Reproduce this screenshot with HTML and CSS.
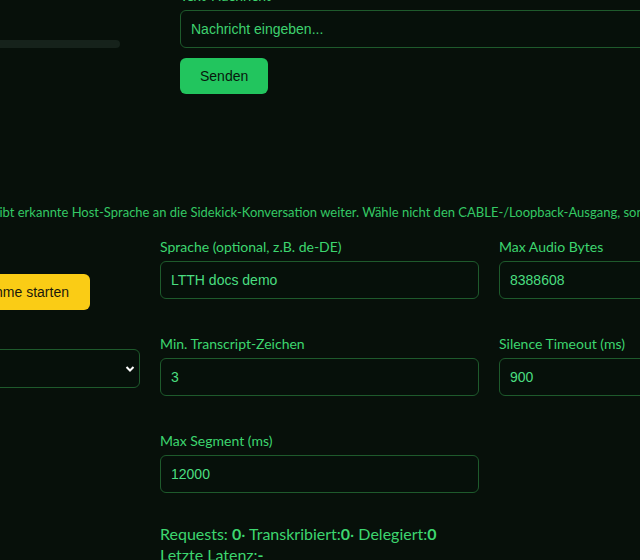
FILE: index.html
```html
<!DOCTYPE html>
<html lang="de">
<head>
  <meta charset="UTF-8" />
  <meta name="viewport" content="width=device-width, initial-scale=1.0" />
  <title>Sidekick Transkription</title>
  <link rel="stylesheet" href="styles.css">
</head>
<body>
  <div id="page">
    <div id="topRow">
      <div class="levelCol">
        <div class="levelBar"><div class="levelFill"></div></div>
      </div>
      <div class="msgCol">
        <label class="fieldLabel" for="textMsg">Text-Nachricht</label>
        <input id="textMsg" class="textInput" type="text" placeholder="Nachricht eingeben..." />
        <button class="sendBtn">Senden</button>
      </div>
    </div>

    <p class="hint">Gibt erkannte Host-Sprache an die Sidekick-Konversation weiter. Wähle nicht den CABLE-/Loopback-Ausgang, sondern dein echtes Mikrofon.</p>

    <div id="sttGrid">
      <div class="deviceCol">
        <button class="recBtn">Aufnahme starten</button>
        <div class="selectWrap">
          <select class="deviceSelect">
            <option></option>
          </select>
          <svg class="chevron" width="10" height="8" viewBox="0 0 10 8"><path d="M1.5 2 L5 5.5 L8.5 2" fill="none" stroke="#fff" stroke-width="2"/></svg>
        </div>
      </div>

      <div class="field">
        <label class="fieldLabel">Sprache (optional, z.B. de-DE)</label>
        <input class="textInput" type="text" value="LTTH docs demo" />
      </div>
      <div class="field">
        <label class="fieldLabel">Max Audio Bytes</label>
        <input class="textInput" type="text" value="8388608" />
      </div>

      <div class="field">
        <label class="fieldLabel">Min. Transcript-Zeichen</label>
        <input class="textInput" type="text" value="3" />
      </div>
      <div class="field">
        <label class="fieldLabel">Silence Timeout (ms)</label>
        <input class="textInput" type="text" value="900" />
      </div>

      <div class="field">
        <label class="fieldLabel">Max Segment (ms)</label>
        <input class="textInput" type="text" value="12000" />
      </div>
      <div class="field"></div>

      <div class="stats">
        Requests: <b>0</b>· Transkribiert:<b>0</b>· Delegiert:<b>0</b><br>
        Letzte Latenz:<b>-</b>
      </div>
    </div>
  </div>
</body>
</html>
```
FILE: styles.css
```css
* {
  box-sizing: border-box;
}
body {
  margin: 0;
  background: #07100a;
  color: #3dd66f;
  font-family: 'Lato', 'Open Sans', sans-serif;
  overflow: hidden;
  width: 640px;
  height: 560px;
}
#page {
  width: 880px;
  margin: -14px 0 0 -62px;
}
#topRow {
  display: grid;
  grid-template-columns: 182px 1fr;
  column-gap: 60px;
}
.levelBar {
  margin-top: 54px;
  height: 8px;
  border-radius: 4px;
  background: #16221b;
  overflow: hidden;
}
.levelFill {
  width: 0;
  height: 100%;
  background: #22c55e;
}
.msgCol {
  display: flex;
  flex-direction: column;
  align-items: flex-start;
}
.fieldLabel {
  display: block;
  font-size: 14px;
  line-height: 20px;
  margin-bottom: 4px;
  color: #3dd66f;
}
.textInput {
  width: 100%;
  height: 38px;
  padding: 0 10px;
  background: #06100a;
  border: 1px solid #1e5a2c;
  border-radius: 6px;
  color: #4ade80;
  font-family: 'Liberation Sans', Arial, sans-serif;
  font-size: 14px;
  outline: none;
}
.textInput::placeholder {
  color: #3ed26f;
  opacity: 1;
}
.sendBtn {
  margin-top: 10px;
  height: 36px;
  padding: 0 20px;
  border: none;
  border-radius: 6px;
  background: #22c55e;
  color: #08170c;
  font-family: 'Liberation Sans', Arial, sans-serif;
  font-size: 14px;
}
.hint {
  margin: 109px 0 0 52px;
  font-size: 13px;
  line-height: 18px;
  white-space: nowrap;
  color: #34c864;
}
#sttGrid {
  margin-top: 16px;
  display: grid;
  grid-template-columns: 202px 319px 319px;
  column-gap: 20px;
  row-gap: 35px;
}
.deviceCol {
  grid-row: 1 / 4;
  display: flex;
  flex-direction: column;
  align-items: flex-end;
  padding-top: 37px;
}
.recBtn {
  height: 36px;
  padding: 0 21px;
  border: none;
  border-radius: 6px;
  background: #facc15;
  color: #1a1a0c;
  font-family: 'Liberation Sans', Arial, sans-serif;
  font-size: 14px;
  white-space: nowrap;
  margin-right: 50px;
}
.selectWrap {
  position: relative;
  width: 100%;
  margin-top: 39px;
}
.deviceSelect {
  display: block;
  width: 100%;
  height: 39px;
  appearance: none;
  background: #06100a;
  border: 1px solid #1e5a2c;
  border-radius: 6px;
  color: #4ade80;
}
.chevron {
  position: absolute;
  right: 5px;
  top: 16px;
}
.stats {
  grid-column: 2 / 4;
  margin-top: -5px;
  font-size: 16px;
  line-height: 21px;
  color: #3dd66f;
}
.stats b {
  font-weight: 700;
}
```
